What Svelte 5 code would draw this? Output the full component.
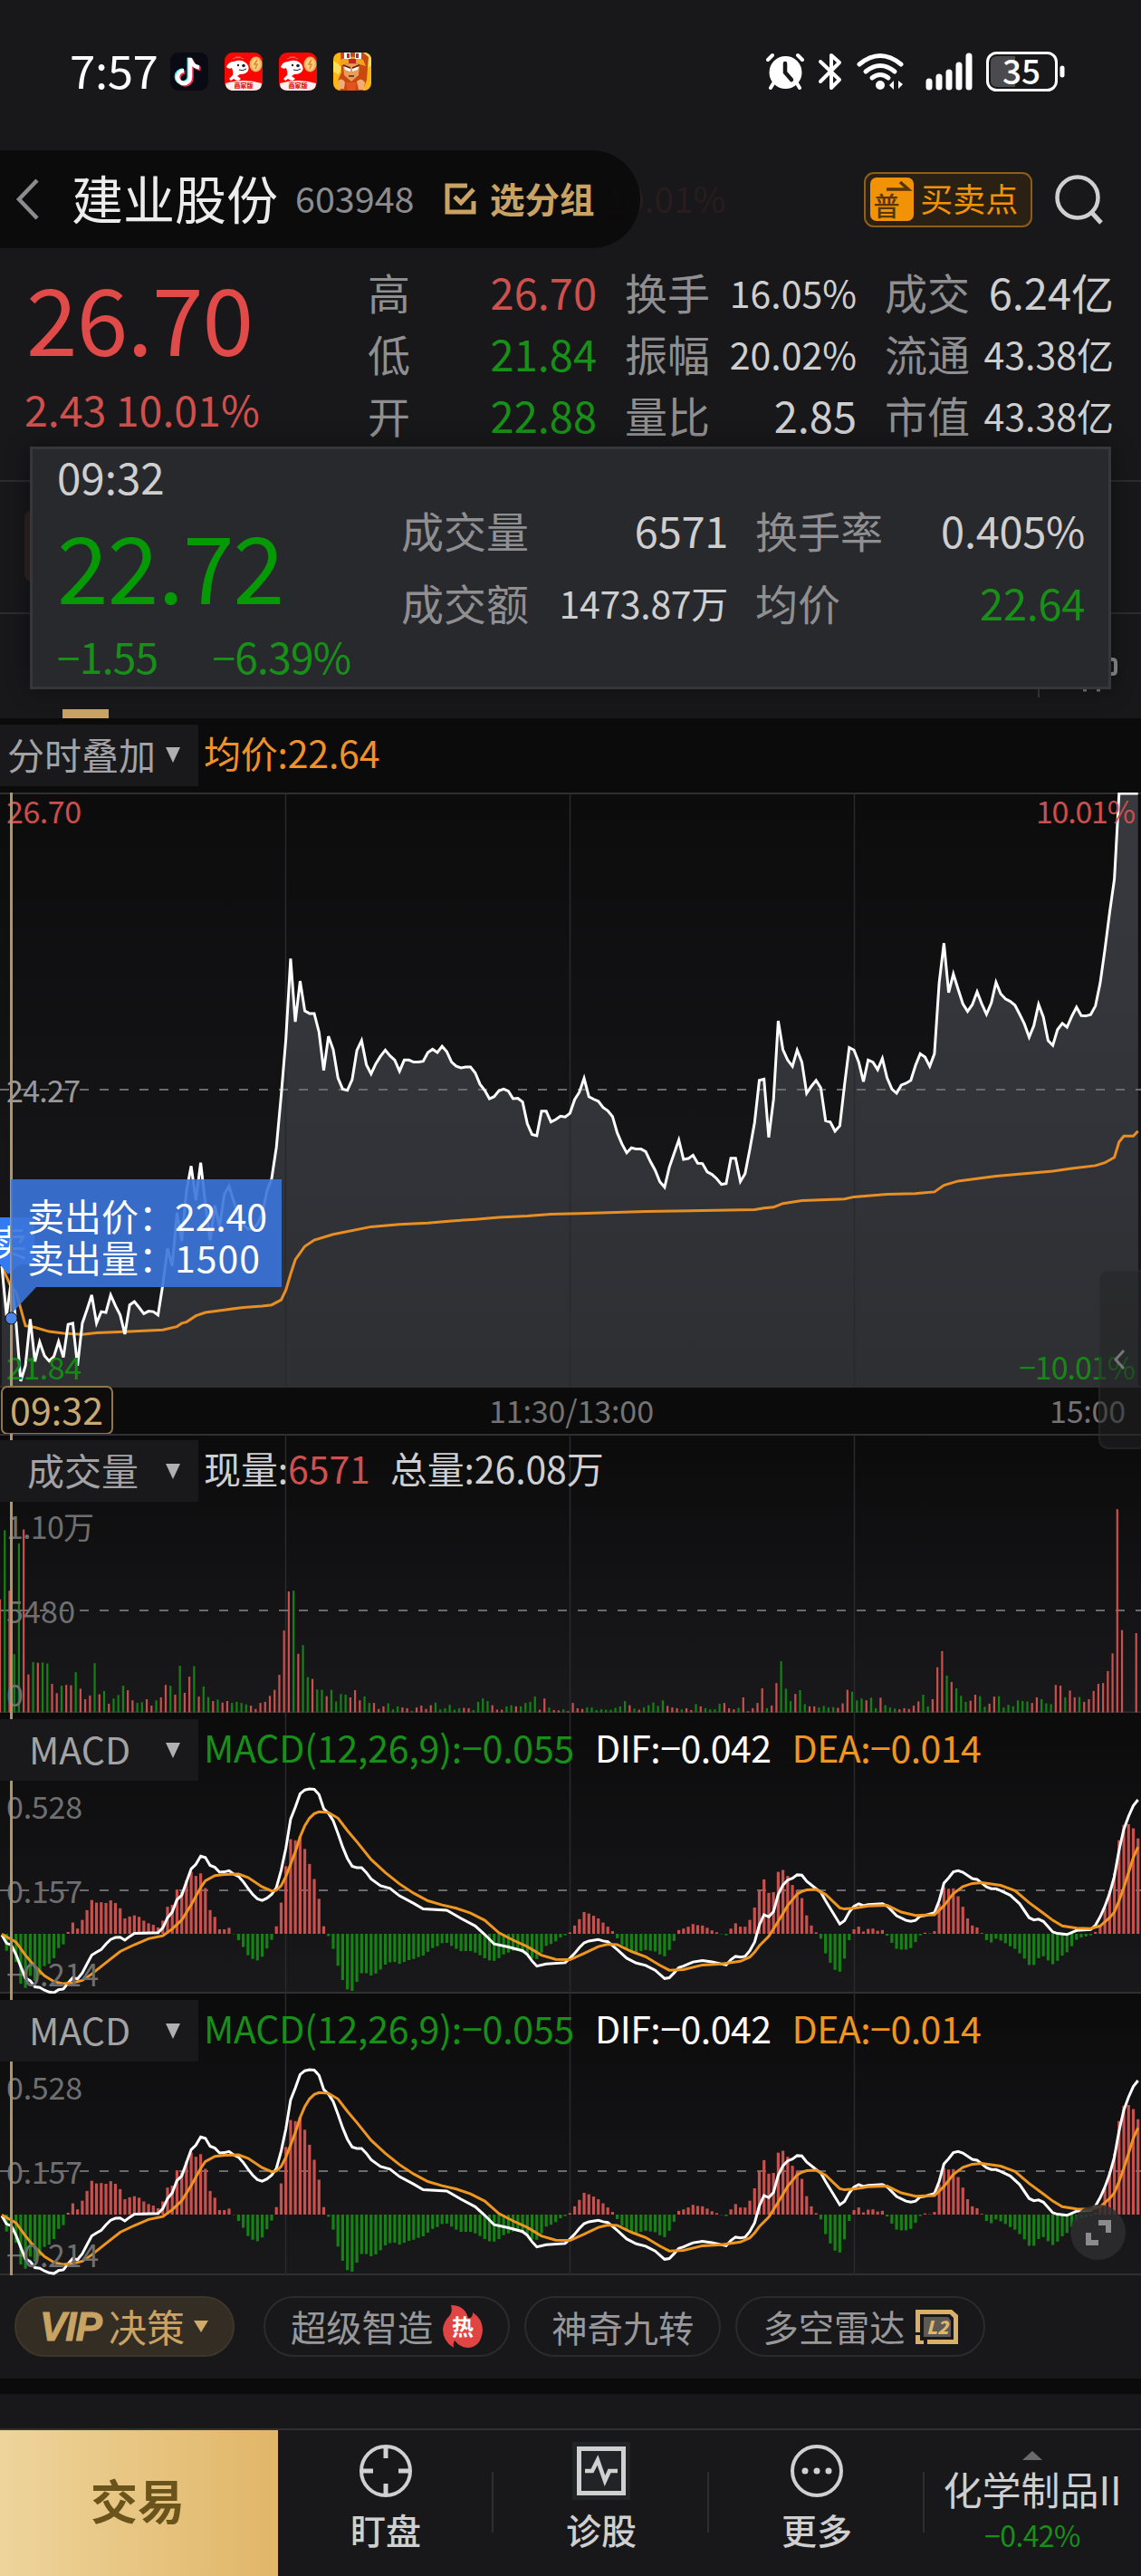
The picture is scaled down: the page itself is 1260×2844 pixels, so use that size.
<script lang="ts">
	type Point = [number, number];

	const UP = '#c9504d';
	const DOWN = '#148314';
	const STEP = 5.228;

	const stats = [
		{ label: '高', value: '26.70', tone: 'up' },
		{ label: '换手', value: '16.05%', small: true },
		{ label: '成交', value: '6.24亿' },
		{ label: '低', value: '21.84', tone: 'down' },
		{ label: '振幅', value: '20.02%', small: true },
		{ label: '流通', value: '43.38亿', small: true },
		{ label: '开', value: '22.88', tone: 'down' },
		{ label: '量比', value: '2.85' },
		{ label: '市值', value: '43.38亿', small: true }
	];

	const details = [
		{ label: '成交量', value: '6571' },
		{ label: '换手率', value: '0.405%' },
		{ label: '成交额', value: '1473.87万', small: true },
		{ label: '均价', value: '22.64', tone: 'down' }
	];

	// one sample per minute, 34 = limit up, 1462 = limit down
	const price = [
		1170, 1290, 1205, 1305, 1447, 1410, 1298, 1400, 1353, 1386, 1399, 1388, 1352, 1390, 1311, 1308, 1410, 1308,
		1275, 1240, 1308, 1280, 1282, 1240, 1266, 1288, 1334, 1264, 1256, 1270, 1285, 1279, 1280, 1288, 1215, 1128,
		1170, 1042, 1110, 990, 930, 1012, 922, 1020, 1108, 1025, 1075, 998, 978, 1015, 1050, 1070, 1082, 1080, 1070,
		1045, 990, 960, 885, 760, 625, 431, 583, 485, 557, 563, 563, 608, 700, 618, 650, 718, 745, 748, 722, 652, 628,
		686, 708, 684, 666, 651, 665, 675, 702, 675, 675, 680, 680, 678, 657, 649, 657, 642, 655, 680, 690, 694, 692,
		692, 706, 733, 748, 768, 763, 749, 745, 750, 768, 767, 776, 828, 854, 857, 798, 798, 824, 818, 810, 812, 803,
		770, 752, 719, 763, 769, 774, 789, 797, 811, 850, 877, 898, 886, 889, 889, 895, 919, 940, 968, 981, 933, 900,
		867, 914, 912, 904, 923, 924, 944, 950, 960, 974, 972, 911, 911, 967, 948, 890, 825, 724, 721, 861, 770, 581,
		650, 675, 690, 651, 680, 755, 738, 724, 742, 821, 824, 846, 833, 735, 645, 651, 680, 727, 675, 680, 698, 671,
		718, 745, 755, 735, 731, 724, 688, 660, 668, 690, 660, 490, 394, 513, 468, 505, 540, 558, 542, 511, 540, 565,
		538, 488, 516, 528, 534, 543, 565, 588, 620, 592, 541, 572, 628, 640, 602, 587, 596, 570, 548, 568, 569, 566,
		545, 490, 410, 320, 240, 34, 34, 34, 34, 34
	];

	const average =
		'0:1170 2:1222 3:1232 5:1314 7:1318 10:1328 13:1332 17:1335 20:1331 27:1328 34:1324 37:1316 38:1308 39:1305 41:1290 43:1282 47:1276 51:1270 55:1267 57:1264 59:1252 60:1228 61:1190 62:1155 64:1123 66:1108 70:1094 78:1076 84:1070 90:1067 95:1062 100:1058 105:1053 111:1050 116:1046 122:1044 136:1039 159:1035 161:1031 163:1029 165:1020 169:1013 178:1009 180:1004 187:998 193:996 197:992 199:976 202:966 210:954 216:948 222:942 226:936 231:929 233:922 235:909 236:872 237:858 239:858 240:846';

	// sign is the direction of the minute, size is the traded volume
	const volume = [
		301, -485, 324, -155, -450, 487, 101, -134, 132, -133, -130, 76, 51, -71, 73, 72, -107, 63, 35, 45, -131, 48,
		-57, 23, -37, -46, -71, 59, 32, -25, -27, 35, 18, -32, 40, 73, -71, 47, -124, 52, 95, -123, 42, -69, -41, 30,
		-34, 26, 30, -25, -28, -25, -21, 18, 9, 25, 28, 44, 60, 100, 218, 322, -324, 156, -179, -94, 89, -61, -60, 43,
		-60, -29, -49, -47, 40, 59, 32, -42, -25, 25, 9, 16, -24, -8, -16, 13, 11, -4, 13, 18, 9, 19, -26, -8, -11,
		-20, -7, -11, 12, 11, -6, -28, -37, -30, 19, 7, 7, -16, -19, 16, -16, -25, -28, -42, 7, 37, -13, 6, 5, -8, 3,
		25, 11, 9, -13, -13, -6, -8, -7, -7, -12, -16, -30, 19, -10, 7, -13, -19, -26, -17, -32, 17, 13, 11, -8, 11, 6,
		-22, 16, -11, -8, -8, -23, 25, 11, 8, -12, 40, 3, 11, 25, 64, -11, 18, 78, -136, -63, -30, 49, -59, -22, 16,
		16, -13, -17, -13, -14, 12, 24, 60, -55, -32, -37, 32, -39, -11, 39, -19, -13, -10, 8, 11, 9, 18, 29, -47, -16,
		35, 120, 163, -98, 81, -64, -44, -28, 31, 47, -43, -15, 23, 42, -43, -13, -20, -16, -32, -30, -29, 25, 40, -35,
		-24, -22, 73, 71, -40, 58, 40, -41, 28, 35, 57, 76, 78, 110, 157, 541, 219, 0, 0, 211
	];

	const histogram = [
		0, -45, -38, -75, -133, -144, -112, -125, -110, -86, -80, -65, -38, -28, 5, 30, 14, 37, 63, 90, 83, 84, 82, 89,
		82, 68, 41, 46, 49, 45, 35, 28, 24, 17, 35, 72, 77, 118, 112, 142, 165, 154, 161, 122, 63, 45, 12, 12, 16, -1,
		-17, -35, -57, -67, -71, -61, -39, -16, 20, 83, 180, 252, 249, 260, 226, 186, 146, 93, 20, -6, -40, -85, -123,
		-148, -152, -128, -105, -105, -111, -106, -95, -82, -76, -75, -80, -75, -70, -67, -62, -58, -48, -38, -33, -25,
		-24, -32, -40, -46, -46, -46, -50, -57, -65, -71, -72, -65, -55, -50, -45, -45, -50, -57, -65, -67, -50, -32,
		-27, -20, -10, -4, 4, 22, 39, 58, 54, 48, 41, 30, 19, 7, -12, -30, -42, -48, -50, -46, -43, -45, -47, -55, -60,
		-43, -19, 10, 14, 19, 26, 23, 22, 16, 9, 4, -1, -4, 14, 28, 19, 19, 37, 70, 117, 145, 109, 111, 165, 170, 154,
		130, 117, 95, 49, 22, 4, -13, -52, -77, -96, -101, -66, -17, 12, 19, 6, 13, 14, 8, 10, -5, -24, -40, -42, -42,
		-38, -22, -4, 3, 1, 7, 80, 124, 120, 121, 100, 72, 41, 22, 17, 2, -17, -23, -13, -18, -25, -33, -40, -52, -66,
		-83, -83, -65, -60, -71, -81, -72, -58, -49, -33, -16, -10, -7, -4, 5, 20, 70, 115, 162, 249, 290, 292, 281,
		254
	];

	const dif =
		'0:1366 1:1388 2:1393 3:1418 4:1450 5:1481 6:1488 7:1504 8:1506 9:1513 10:1518 11:1520 12:1512 13:1510 14:1494 15:1480 16:1483 17:1467 18:1443 19:1420 20:1412 21:1405 22:1390 23:1378 24:1373 25:1372 26:1380 27:1370 28:1362 33:1360 34:1347 35:1320 36:1305 37:1272 38:1260 39:1225 40:1190 41:1178 42:1156 43:1160 44:1181 45:1186 46:1199 47:1198 48:1195 49:1204 50:1210 51:1224 52:1242 53:1258 54:1270 55:1274 56:1268 57:1258 58:1240 59:1194 60:1135 61:1058 62:1026 63:990 64:980 65:977 66:978 67:992 68:1030 69:1042 70:1062 71:1096 72:1132 73:1162 74:1183 75:1187 76:1187 77:1200 78:1217 80:1235 82:1242 84:1262 87:1282 89:1297 94:1300 97:1322 100:1342 102:1365 104:1390 107:1398 110:1408 111:1418 112:1435 113:1449 115:1443 119:1440 120:1428 121:1415 122:1400 123:1387 124:1382 126:1378 127:1382 128:1384 130:1405 132:1428 134:1441 136:1447 138:1460 140:1482 141:1480 142:1467 143:1453 144:1449 146:1438 148:1434 150:1438 153:1446 154:1432 155:1423 156:1425 157:1423 158:1408 159:1385 160:1340 161:1312 162:1318 163:1304 164:1258 165:1233 166:1220 167:1215 168:1206 169:1207 170:1223 172:1243 173:1252 174:1275 177:1337 178:1328 179:1305 180:1290 181:1283 182:1288 183:1285 186:1283 187:1289 189:1315 191:1327 192:1330 193:1327 194:1316 195:1314 197:1307 198:1275 199:1228 200:1214 201:1198 202:1195 203:1199 205:1216 206:1218 208:1238 209:1243 210:1243 211:1248 213:1260 215:1283 217:1320 218:1326 219:1324 220:1330 222:1358 223:1362 225:1365 227:1354 230:1352 231:1340 232:1318 233:1290 234:1255 235:1210 236:1140 237:1085 238:1050 239:1022 240:1006';

	const dea =
		'0:1364 1:1371 3:1385 5:1420 7:1450 9:1475 11:1490 13:1496 15:1493 17:1487 19:1470 22:1440 25:1410 28:1392 31:1376 34:1368 36:1350 38:1326 40:1286 42:1240 43:1222 45:1208 47:1205 50:1204 52:1213 55:1238 57:1249 58:1247 59:1235 60:1210 61:1178 62:1145 63:1105 64:1075 65:1055 66:1043 67:1038 69:1040 71:1055 73:1088 75:1118 78:1165 81:1200 84:1230 87:1255 90:1275 93:1286 96:1295 99:1308 102:1327 105:1360 108:1380 111:1397 114:1420 117:1431 120:1432 123:1415 126:1397 128:1391 130:1392 133:1410 136:1424 139:1447 141:1460 144:1458 148:1446 152:1443 156:1436 158:1425 159:1412 160:1395 162:1370 164:1330 166:1288 168:1257 169:1250 170:1246 172:1245 174:1258 176:1282 177:1294 178:1297 180:1295 183:1289 187:1287 190:1305 193:1314 197:1312 199:1288 201:1256 203:1237 205:1229 207:1227 211:1234 214:1248 217:1280 220:1308 222:1327 224:1342 227:1348 230:1349 232:1342 234:1320 235:1305 236:1275 237:1240 238:1200 239:1160 240:1132';

	function parse(series: string): Point[] {
		return series.split(' ').map((pair) => pair.split(':').map(Number) as Point);
	}

	function line(points: Point[], y: (v: number) => number) {
		return points.map(([m, v]) => `${(2 + m * STEP).toFixed(1)},${y(v).toFixed(1)}`).join(' ');
	}

	const priceY = (v: number) => 1 + (v - 34) / 2.178;
	const macdY = (v: number) => 244 + (v - 1363) / 2.412;

	const priceLine = line(price.map((v, m) => [m, v] as Point), priceY);
	const averageLine = line(parse(average), priceY);
	const difLine = line(parse(dif), macdY);
	const deaLine = line(parse(dea), macdY);

	const macdPanels = [
		{ id: 'a', height: 310 },
		{ id: 'b', height: 311 }
	];
</script>

{#snippet axis(text: string, x: number, y: number, width: number, color: string)}
	<text {x} {y} textLength={width} fill={color} font-size="34">{text}</text>
{/snippet}

{#snippet columns(height: number)}
	{#each [315.5, 629.5, 943.5] as x}
		<line x1={x} x2={x} y1="0" y2={height} stroke="#2a2a2c" stroke-width="1.500" />
	{/each}
{/snippet}

{#snippet jd()}
	<svg width="42" height="42" viewBox="0 0 42 42">
		<rect width="42" height="42" rx="9" fill="#f90705" />
		<path d="M1 34Q21 28 41 34Q41 42 32 42H10Q1 42 1 34Z" fill="#fbefed" />
		<path d="M2 16Q4 10 10 10Q18 7 23 11Q28 15 26 20Q24 24 17 24L14 26L18 29Q15 33 10 29L7 31L5 29L9 25Q10 22 8 17Q5 19 2 16Z" fill="#fff" />
		<circle cx="15" cy="14" r="1.200" fill="#222" />
		<circle cx="21" cy="14.500" r="1.800" fill="#222" />
		<path d="M16 19Q20 21 24 18" fill="none" stroke="#222" />
		<path d="M9 7Q15 4 21 7M12 5H18" fill="none" stroke="#f0605a" stroke-width="1.200" />
		<ellipse cx="34.500" cy="13" rx="7" ry="8.500" fill="#eeb15b" />
		<ellipse cx="34.500" cy="13" rx="5" ry="6.500" fill="#f8cd7f" />
		<path d="M36 8L33 13H36L34 18" fill="none" stroke="#d98a2e" stroke-width="1.500" />
		<text x="21" y="39" text-anchor="middle" font-size="7" font-weight="900" fill="#e0211b">商家版</text>
	</svg>
{/snippet}

<div class="screen">
	<header class="status">
		<span class="clock">7:57</span>
		<div class="apps">
			<svg width="42" height="42" viewBox="0 0 42 42">
				<rect width="42" height="42" rx="9" fill="#0a0a14" />
				<g fill="none" stroke-width="4.500">
					<path d="M22 6V27A7 7 0 1 1 15 20M22 7Q24 15 32 16.500" stroke="#27e8e6" transform="translate(-1.200 -.5)" />
					<path d="M22 6V27A7 7 0 1 1 15 20M22 7Q24 15 32 16.500" stroke="#f52d58" transform="translate(1.500 1.500)" />
					<path d="M22 6V27A7 7 0 1 1 15 20M22 7Q24 15 32 16.500" stroke="#fff" />
				</g>
			</svg>
			{@render jd()}
			{@render jd()}
			<svg width="42" height="42" viewBox="0 0 42 42">
				<defs><clipPath id="king"><rect width="42" height="42" rx="8" /></clipPath></defs>
				<g clip-path="url(#king)">
					<rect width="42" height="42" fill="#ffb516" />
					<path d="M0 9L10 16L6 24L0 21Z M33 0L42 0V14L34 20Z" fill="#ffe05a" />
					<path d="M8 0H33L39 5L37 30L33 42H8L5 31L9 22Z" fill="#c8490f" />
					<path d="M8 8Q20 1 33 8L36 15Q20 9 7 15Z" fill="#f5a31f" />
					<path d="M12 0H19V7H12ZM24 0H31V7H24Z" fill="#fff" />
					<path d="M15 1H18V6H15ZM25 1H28V6H25ZM17 7H25V12H17Z" fill="#c5251c" />
					<path d="M11 14Q20 10 29 14L28 25L20 32L12 25Z" fill="#e99c5a" />
					<path d="M12 15L19 18V21L13 19ZM28 15L21 18V21L27 19Z" fill="#fff" />
					<path d="M11 14L19 17M29 14L21 17M17 26H23" stroke="#5b1f10" stroke-width="1.500" />
					<path d="M5 31Q10 27 13 33L12 40H6ZM26 32Q31 27 35 33L34 41H28Z" fill="#f1ad72" />
					<path d="M14 33H26L24 42H16Z" fill="#e2541c" />
				</g>
			</svg>
		</div>
		<svg class="indicators" width="332" height="46" viewBox="846 55 332 46">
			<g fill="none" stroke="#fff" stroke-linecap="round">
				<path d="M848 65L853 60M881 60L886 65M854 91L851 96M880 91L883 96" stroke-width="4" />
				<circle cx="867.500" cy="79" r="18" fill="#fff" stroke="none" />
				<path d="M867 69V79L874 87" stroke="#18181a" stroke-width="4.500" />
				<path d="M906 67L927 87L918 96V60L927 68L906 89" stroke-width="4" stroke-linejoin="round" />
				<path d="M949 70Q972 51 995 70" stroke-width="5" />
				<path d="M956 78Q972 65 988 78" stroke-width="5" />
				<path d="M963 85Q972 78 981 85" stroke-width="5" />
				<circle cx="972" cy="93" r="5" fill="#fff" stroke="none" />
				<path d="M982 93L987 88V98ZM997 92L992 97V88Z" fill="#fff" stroke="none" />
				<path d="M1026 89V95M1037 84V95M1048 79V95M1059 71V95M1070 61V95" stroke-width="7" />
				<rect x="1090.500" y="57.500" width="76" height="41" rx="10" stroke-width="3" />
				<path d="M1173 74V82" stroke-width="5" />
			</g>
			<path d="M1121 61H1101Q1094 61 1094 68V88Q1094 95 1101 95H1121Z" fill="#4b4b4d" />
			<text x="1128" y="91.500" text-anchor="middle" font-size="37" font-weight="500" fill="#fff">35</text>
		</svg>
	</header>

	<div class="title-bar">
		<span class="ghost">26.70 2.43 10.01%</span>
		<div class="pill">
			<svg width="27" height="48" viewBox="0 0 27 48"><path d="M24 3L4 24L24 45" fill="none" stroke="#8c8c8e" stroke-width="4.500" /></svg>
			<h1>建业股份</h1>
			<span class="code">603948</span>
			<svg class="check" width="36" height="36" viewBox="0 0 36 36">
				<path d="M25 3H3V32H32V20" fill="none" stroke="#c8a364" stroke-width="5" />
				<path d="M11 15L18 22L32 7" fill="none" stroke="#c8a364" stroke-width="5" />
			</svg>
			<span class="group">选分组</span>
		</div>
		<div class="trade-points">
			<svg width="48" height="48" viewBox="0 0 48 48">
				<rect width="48" height="48" rx="7" fill="#f19207" />
				<path d="M18 13H42L33 5" fill="none" stroke="#57370a" stroke-width="3.500" />
				<text x="18" y="43" text-anchor="middle" font-size="29" font-weight="500" fill="#57370a">普</text>
			</svg>
			<span>买卖点</span>
		</div>
		<svg class="search" width="56" height="56" viewBox="0 0 56 56">
			<circle cx="26" cy="26" r="22.500" fill="none" stroke="#cfcfd0" stroke-width="4.500" />
			<path d="M41 42L52 54" stroke="#cfcfd0" stroke-width="5" />
		</svg>
	</div>

	<section class="quote">
		<div class="last">
			<strong>26.70</strong>
			<span>2.43 10.01%</span>
		</div>
		<div class="stats">
			{#each stats as item}
				<div class="stat">
					<span class="label">{item.label}</span>
					<span class="value {item.tone ?? ''}" class:small={item.small}>{item.value}</span>
				</div>
			{/each}
		</div>
	</section>

	<section class="under">
		<div class="strip"><i></i></div>
		<div class="tabs">
			<svg width="114" height="92" viewBox="0 0 114 92">
				<path d="M1 20V92" stroke="#39393b" stroke-width="2" />
				<path d="M76 50H83Q86 50 86 54V62Q86 66 83 66H76" fill="none" stroke="#8e8e90" stroke-width="4" />
				<path d="M50 84H54M65 84H69" stroke="#77777a" stroke-width="3" />
			</svg>
			<i></i>
		</div>

		<div class="popup">
			<div class="moment">
				<span class="time">09:32</span>
				<strong>22.72</strong>
				<div class="change"><span>−1.55</span><span>−6.39%</span></div>
			</div>
			<div class="details">
				{#each details as item}
					<div class="stat">
						<span class="label">{item.label}</span>
						<span class="value {item.tone ?? ''}" class:small={item.small}>{item.value}</span>
					</div>
				{/each}
			</div>
		</div>
	</section>

	<section class="overlay-bar">
		<div class="picker first"><span>分时叠加</span><i class="caret"></i></div>
		<span class="avg">均价:22.64</span>
	</section>

	<section class="price-panel">
		<svg width="1260" height="709" viewBox="0 0 1260 709">
			<defs>
				<linearGradient id="back" x1="0" y1="0" x2="0" y2="1">
					<stop offset="0" stop-color="#0c0c0d" />
					<stop offset="1" stop-color="#1a1a1c" />
				</linearGradient>
				<linearGradient id="area" x1="0" y1="0" x2="0" y2="1">
					<stop offset="0" stop-color="#38393e" />
					<stop offset="1" stop-color="#2e2f33" />
				</linearGradient>
			</defs>
			<rect width="1260" height="656" fill="url(#back)" />
			<polygon points="2,656 {priceLine} 1257,656" fill="url(#area)" />
			<path d="M0 1H1260M0 656H1260" stroke="#2f2f32" stroke-width="2" />
			{@render columns(656)}
			<path d="M0 328H1260" stroke="#6b6b6d" stroke-width="2" stroke-dasharray="10 12" />
			<polyline points={averageLine} fill="none" stroke="#e78f25" stroke-width="3" />
			<polyline points={priceLine} fill="none" stroke="#fff" stroke-width="3" />

			{@render axis('26.70', 7, 34, 83, '#c9504d')}
			{@render axis('24.27', 7, 342, 82, '#98989a')}
			{@render axis('21.84', 7, 648, 83, '#148a14')}
			{@render axis('10.01%', 1144, 34, 110, '#c9504d')}
			{@render axis('−10.01%', 1125, 648, 129, '#148a14')}
			{@render axis('11:30/13:00', 540, 696, 182, '#737375')}
			{@render axis('15:00', 1159, 696, 84, '#737375')}

			<path d="M0 469H38V521H22L9 532L0 521Z" fill="#347af2" />
			<text x="-10" y="512" font-size="40" fill="#fff">卖</text>
			<path d="M12.500 0V709" stroke="#b39562" stroke-width="3" />
			<path d="M12 427H311V546H40L13 575Z" fill="#3b74dc" fill-opacity=".9" />
			<circle cx="12.500" cy="580.500" r="6.500" fill="#4a84e6" stroke="#101318" />
			<text x="30" y="484" font-size="41" fill="#fff">卖出价：</text>
			<text x="193" y="484" font-size="41" textLength="102" fill="#fff">22.40</text>
			<text x="30" y="530" font-size="41" fill="#fff">卖出量：</text>
			<text x="193" y="530" font-size="41" textLength="94" fill="#fff">1500</text>

			<rect x="2" y="656" width="122" height="52" rx="6" fill="#0e0d0c" stroke="#907648" stroke-width="2" />
			<text x="11" y="698" font-size="41" textLength="103" fill="#c9aa72">09:32</text>
		</svg>
		<div class="drawer">
			<svg width="13" height="24" viewBox="0 0 13 24"><path d="M11 2L2 12L11 22" fill="none" stroke="#77777a" stroke-width="3" /></svg>
		</div>
	</section>

	<section class="panel volume">
		<svg width="1260" height="308" viewBox="0 0 1260 308">
			<path d="M0 1H1260M0 307.500H1260" stroke="#303032" stroke-width="2" />
			{@render columns(308)}
			<path d="M0 195H1260" stroke="#6b6b6d" stroke-width="2" stroke-dasharray="10 12" />
			{#each volume as v, m}
				<rect x={m * STEP - 1.1} y={307.5 - Math.abs(v) / 2.412} width="2.200" height={Math.abs(v) / 2.412} fill={v > 0 ? UP : DOWN} />
			{/each}
			{@render axis('1.10万', 7, 116, 97, '#6f6f71')}
			{@render axis('5480', 7, 209, 76, '#6f6f71')}
			{@render axis('0', 7, 301, 18, '#6f6f71')}
			<path d="M12.500 0V308" stroke="#b39562" stroke-width="3" />
		</svg>
		<div class="head">
			<div class="picker"><span>成交量</span><i class="caret"></i></div>
			<div class="legend">
				<span>现量:<b>6571</b></span>
				<span>总量:26.08万</span>
			</div>
		</div>
	</section>

	{#each macdPanels as panel (panel.id)}
		<section class="panel macd">
			<svg width="1260" height={panel.height} viewBox="0 0 1260 {panel.height}">
				<path d="M0 {panel.height - 1}H1260" stroke="#303032" stroke-width="2" />
				{@render columns(panel.height)}
				<path d="M0 196H1260" stroke="#6b6b6d" stroke-width="2" stroke-dasharray="10 12" />
				{#each histogram as v, m}
					<rect
						x={0.4 + m * STEP}
						y={v > 0 ? 244 - v / 2.412 : 244}
						width="3.200"
						height={Math.abs(v) / 2.412}
						fill={v > 0 ? UP : DOWN}
					/>
				{/each}
				<polyline points={difLine} fill="none" stroke="#fff" stroke-width="3" />
				<polyline points={deaLine} fill="none" stroke="#ee961f" stroke-width="3" />
				{@render axis('0.528', 7, 117, 84, '#6f6f71')}
				{@render axis('0.157', 7, 210, 84, '#6f6f71')}
				{@render axis('−0.214', 7, 302, 102, '#6f6f71')}
				<path d="M12.500 0V{panel.height}" stroke="#b39562" stroke-width="3" />
			</svg>
			<div class="head">
				<div class="picker"><span>MACD</span><i class="caret"></i></div>
				<div class="legend">
					<span class="down">MACD(12,26,9):−0.055</span>
					<span class="dif">DIF:−0.042</span>
					<span class="dea">DEA:−0.014</span>
				</div>
			</div>
			{#if panel.id === 'b'}
				<div class="expand">
					<svg width="28" height="28" viewBox="0 0 28 28"><path d="M14 3H25V14M3 14V25H14" fill="none" stroke="#8b8b8d" stroke-width="6" /></svg>
				</div>
			{/if}
		</section>
	{/each}

	<section class="tools">
		<div class="tool vip"><em>VIP</em><span>决策</span><i class="caret"></i></div>
		<div class="tool">
			<span>超级智造</span>
			<svg width="44" height="47" viewBox="0 0 44 47">
				<path d="M9 0Q24 0 28 14Q33 15 33 8Q44 15 44 28Q42 47 27 47Q18 46 13 39Q11 42 12 47Q0 40 0 26Q1 18 8 11Q11 6 9 0Z" fill="#e04543" />
				<text x="22" y="33" text-anchor="middle" font-size="24" font-weight="700" fill="#fff">热</text>
			</svg>
		</div>
		<div class="tool">神奇九转</div>
		<div class="tool">
			<span>多空雷达</span>
			<svg width="47" height="38" viewBox="0 0 47 38">
				<path d="M0 0H40L47 6V38H13V33H42V9L38 5H5V25H0ZM0 28H5V34H9V38H0Z" fill="#d9b066" />
				<path d="M9 8H36L39 12V30H9Z" fill="#5d5a55" />
				<text x="24" y="27" text-anchor="middle" font-size="20" font-style="italic" font-weight="900" fill="#e0b768">L2</text>
			</svg>
		</div>
	</section>

	<div class="gap"></div>

	<nav>
		<div class="deal">交易</div>
		<div class="item">
			<svg width="64" height="64" viewBox="0 0 64 64">
				<path d="M32 4V18M32 60V46M4 32H18M60 32H46" stroke="#d0d0d1" stroke-width="5" />
				<circle cx="32" cy="32" r="27" fill="none" stroke="#d0d0d1" stroke-width="4" />
			</svg>
			<span>盯盘</span>
		</div>
		<div class="item">
			<svg width="64" height="64" viewBox="0 0 64 64">
				<rect width="64" height="64" fill="#222326" />
				<rect x="7.500" y="7.500" width="49" height="49" fill="none" stroke="#d0d0d1" stroke-width="5" />
				<path d="M14 32H22L28 20L36 43L41 32H50" fill="none" stroke="#d0d0d1" stroke-width="4.500" />
			</svg>
			<span>诊股</span>
		</div>
		<div class="item">
			<svg width="64" height="64" viewBox="0 0 64 64">
				<circle cx="32" cy="32" r="27" fill="none" stroke="#d0d0d1" stroke-width="4" />
				<g fill="#d0d0d1"><circle cx="19" cy="32" r="3.500" /><circle cx="32" cy="32" r="3.500" /><circle cx="45" cy="32" r="3.500" /></g>
			</svg>
			<span>更多</span>
		</div>
		<div class="item sector">
			<i class="up-caret"></i>
			<span class="name">化学制品II</span>
			<span class="rate">−0.42%</span>
		</div>
	</nav>
</div>

<style>
	:global(body) {
		margin: 0;
		background: #18181a;
	}
	.screen {
		width: 1260px;
		height: 2844px;
		overflow: hidden;
		background: #18181a;
		color: #cfcfd0;
		font-family: 'Noto Sans CJK SC', sans-serif;
	}
	.screen * {
		box-sizing: border-box;
	}
	svg {
		display: block;
		flex: none;
	}
	span,
	strong,
	h1 {
		white-space: nowrap;
	}
	.up {
		color: #cf504d !important;
	}
	.down {
		color: #179017 !important;
	}

	.status {
		display: flex;
		align-items: center;
		height: 166px;
		padding: 0 82px 8px 77px;
	}
	.clock {
		width: 111px;
		margin-top: -7px;
		color: #fff;
		font-size: 51px;
		line-height: 60px;
		letter-spacing: -0.400px;
	}
	.apps {
		display: flex;
		gap: 18px;
	}
	.indicators {
		margin-left: auto;
	}

	.title-bar {
		position: relative;
		display: flex;
		align-items: center;
		height: 108px;
		padding-right: 40px;
	}
	.ghost {
		position: absolute;
		left: 479px;
		top: 22px;
		color: #291c1d;
		font-size: 39px;
		line-height: 60px;
		letter-spacing: -0.100px;
	}
	.pill {
		position: relative;
		display: flex;
		align-items: center;
		width: 708px;
		height: 108px;
		padding-left: 17px;
		border-radius: 0 54px 54px 0;
		background: rgba(10, 10, 10, 0.9);
	}
	h1 {
		margin: -6px 0 0 35px;
		color: #ececec;
		font-size: 57px;
		font-weight: 400;
		line-height: 80px;
	}
	.code {
		width: 137px;
		margin: -5px 0 0 19px;
		color: #8c8c8e;
		font-size: 39.500px;
	}
	.check {
		margin-left: 28px;
		margin-right: 14px;
	}
	.group {
		margin-top: -4px;
		color: #c8a364;
		font-size: 38.500px;
		font-weight: 700;
	}
	.trade-points {
		display: flex;
		align-items: center;
		gap: 8px;
		width: 186px;
		height: 61px;
		margin-left: 247px;
		padding-left: 5px;
		border: 2px solid #8e5d1a;
		border-radius: 11px;
		background: #2b2014;
		color: #f19207;
		font-size: 36px;
		line-height: 50px;
	}
	.trade-points span {
		margin: -4px 0 0 -1px;
	}
	.search {
		margin-left: 24px;
	}

	.quote {
		display: flex;
		height: 219px;
		padding: 14px 30px 0 29px;
	}
	.last {
		display: flex;
		flex-direction: column;
		width: 378px;
		color: #cf504d;
	}
	.last strong {
		color: #e04a48;
		font-size: 102px;
		font-weight: 400;
		line-height: 122px;
		letter-spacing: -0.900px;
	}
	.last span {
		margin: 8px 0 0 -2px;
		font-size: 46.500px;
		line-height: 66px;
	}
	.stats {
		display: grid;
		grid-template-columns: 253px 256px 253px;
		grid-auto-rows: 68px;
		column-gap: 31px;
	}
	.stat {
		display: flex;
		align-items: center;
		justify-content: space-between;
		font-size: 47px;
		line-height: 68px;
	}
	.stat .label {
		color: #8f8f91;
	}
	.stat .value {
		font-size: 47px;
	}
	.stat .small {
		font-size: 41px;
	}

	.under {
		position: relative;
		height: 300px;
	}
	.strip {
		height: 185px;
		border-bottom: 2px solid #2c2c2e;
		padding: 37px 27px 0;
	}
	.strip::before {
		content: '';
		display: block;
		height: 2px;
		margin: 0 -27px 32px;
		background: #2c2c2e;
	}
	.strip i {
		display: block;
		width: 200px;
		height: 78px;
		border-radius: 8px;
		background: #2f2323;
	}
	.tabs {
		display: flex;
		flex-direction: column;
		justify-content: flex-end;
		height: 115px;
	}
	.tabs svg {
		align-self: flex-end;
	}
	.tabs i {
		width: 51px;
		height: 10px;
		margin: 13px 0 0 69px;
		background: #c8a364;
	}
	.popup {
		position: absolute;
		top: 0;
		left: 33px;
		display: flex;
		width: 1194px;
		height: 268px;
		border: 3px solid #36373b;
		background: #28292d;
		box-shadow: 0 0 24px rgba(0, 0, 0, 0.4);
	}
	.moment {
		display: flex;
		flex-direction: column;
		width: 407px;
		padding-left: 27px;
		color: #179017;
	}
	.time {
		color: #cfcfd0;
		font-size: 47.500px;
		line-height: 60px;
	}
	.moment strong {
		margin: 6px 0 0;
		color: #059905;
		font-size: 102px;
		font-weight: 400;
		line-height: 122px;
		letter-spacing: -0.900px;
	}
	.change {
		display: flex;
		gap: 60px;
		margin-top: 7px;
		font-size: 46px;
		line-height: 66px;
		letter-spacing: -0.700px;
	}
	.details {
		display: grid;
		grid-template-columns: 361px 364px;
		grid-auto-rows: 80px;
		column-gap: 30px;
		padding-top: 49px;
	}
	.details .value {
		letter-spacing: -0.300px;
	}

	.overlay-bar {
		display: flex;
		align-items: center;
		height: 82px;
		padding-bottom: 1px;
		background: #0b0b0b;
	}
	.picker {
		display: flex;
		align-items: center;
		justify-content: space-between;
		width: 219px;
		height: 68px;
		padding: 0 20px 0 30px;
		background: #19191b;
		color: #a3a3a5;
		font-size: 41px;
		line-height: 56px;
	}
	.picker.first {
		padding-left: 8px;
	}
	.picker span {
		margin-top: -4px;
	}
	.caret {
		border: 8.500px solid transparent;
		border-top: 17px solid #b0b0b2;
		border-bottom: 0;
	}
	.avg {
		margin: -8px 0 0 6px;
		color: #f0912a;
		font-size: 41px;
		line-height: 60px;
		letter-spacing: -0.200px;
	}

	.price-panel {
		position: relative;
		height: 708px;
		background: #0b0b0b;
	}
	.drawer {
		position: absolute;
		top: 527px;
		right: -8px;
		display: flex;
		align-items: center;
		width: 55px;
		height: 198px;
		padding-left: 15px;
		border: 2px solid rgba(60, 60, 62, 0.3);
		border-radius: 11px;
		background: rgba(36, 36, 38, 0.55);
		z-index: 2;
	}

	.panel {
		position: relative;
		display: grid;
		background: linear-gradient(#0b0b0c, #19191b);
	}
	.panel > svg,
	.head {
		grid-area: 1 / 1;
	}
	.head {
		display: flex;
		align-items: center;
		align-self: start;
		height: 68px;
		margin-top: 7px;
		z-index: 1;
	}
	.macd .picker {
		padding-left: 32px;
	}
	.legend {
		display: flex;
		gap: 22px;
		margin: -8px 0 0 6px;
		font-size: 41px;
		line-height: 60px;
		letter-spacing: -0.100px;
	}
	.macd .legend {
		gap: 23px;
		letter-spacing: -0.200px;
	}
	.legend b {
		color: #cf504d;
		font-weight: 400;
	}
	.dif {
		color: #fff;
		letter-spacing: -0.500px;
	}
	.dea {
		color: #f0961f;
		letter-spacing: -0.500px;
	}
	.expand {
		position: absolute;
		right: 17px;
		bottom: 17px;
		display: grid;
		place-items: center;
		width: 61px;
		height: 61px;
		border-radius: 50%;
		background: rgba(46, 46, 48, 0.85);
	}

	.tools {
		display: flex;
		gap: 16px;
		height: 114px;
		padding: 23px 16px 0;
	}
	.tool {
		display: flex;
		align-items: center;
		gap: 11px;
		height: 67px;
		padding: 0 28px;
		border: 2px solid #2b2b2d;
		border-radius: 34px;
		color: #98989a;
		font-size: 39.300px;
		line-height: 56px;
	}
	.tool.vip {
		width: 243px;
		gap: 3px;
		margin-right: 16px;
		padding: 0 26px;
		border-color: #3d3629;
		background: #332d24;
		color: #c8a364;
		font-size: 42px;
	}
	.tool span {
		margin-top: -2px;
	}
	.vip em {
		width: 73px;
		font-family: 'Liberation Sans', sans-serif;
		font-size: 44px;
		font-weight: 700;
		letter-spacing: -1px;
		-webkit-text-stroke: 1px #c8a364;
	}
	.vip .caret {
		margin-left: 7px;
		border-top: 13px solid #d0ab68;
	}

	.gap {
		height: 55px;
		border-top: 17px solid #0b0b0b;
	}

	nav {
		display: flex;
		height: 163px;
		border-top: 2px solid #303032;
	}
	.deal {
		width: 307px;
		padding-right: 3px;
		background: linear-gradient(90deg, #eed49b, #e0b668);
		color: #6b541c;
		font-size: 52px;
		font-weight: 700;
		line-height: 154px;
		text-align: center;
	}
	.item {
		position: relative;
		display: flex;
		flex-direction: column;
		align-items: center;
		width: 238px;
		padding-top: 13px;
		font-size: 39px;
		font-weight: 500;
		line-height: 56px;
	}
	.item:not(:last-child)::after {
		content: '';
		position: absolute;
		right: 0;
		top: 46px;
		width: 2px;
		height: 67px;
		background: #2e2e30;
	}
	.item span {
		margin-top: 4px;
	}
	.sector {
		padding-top: 23px;
	}
	.up-caret {
		border: 11px solid transparent;
		border-top: 0;
		border-bottom: 10px solid #6b6b6d;
	}
	.item .name {
		margin-top: 2px;
		font-size: 43px;
		font-weight: 400;
		line-height: 58px;
	}
	.item .rate {
		margin-top: 0;
		color: #179017;
		font-size: 32px;
		font-weight: 400;
		line-height: 44px;
		letter-spacing: -0.600px;
	}
</style>
